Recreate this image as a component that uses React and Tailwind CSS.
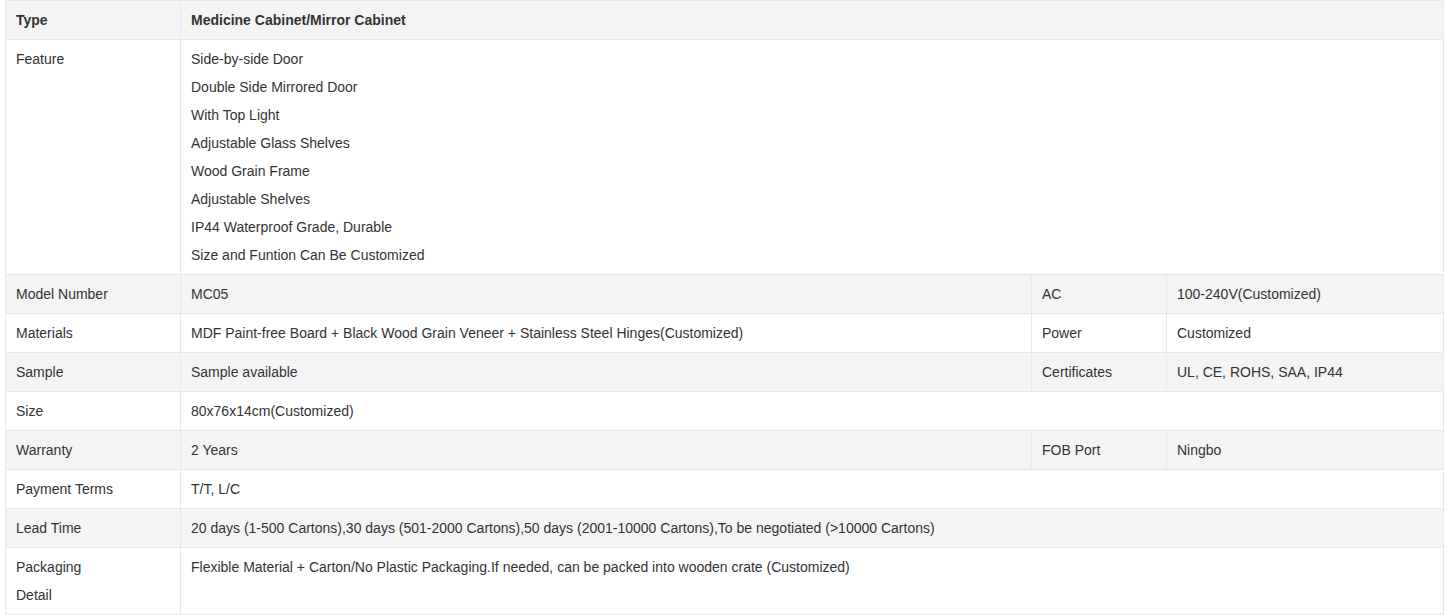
export default function App() {
  const rows = [
    { k: "Model Number", v: "MC05", k2: "AC", v2: "100-240V(Customized)" },
    { k: "Materials", v: "MDF Paint-free Board + Black Wood Grain Veneer + Stainless Steel Hinges(Customized)", k2: "Power", v2: "Customized" },
    { k: "Sample", v: "Sample available", k2: "Certificates", v2: "UL, CE, ROHS, SAA, IP44" },
    { k: "Size", v: "80x76x14cm(Customized)" },
    { k: "Warranty", v: "2 Years", k2: "FOB Port", v2: "Ningbo" },
    { k: "Payment Terms", v: "T/T, L/C" },
    { k: "Lead Time", v: "20 days (1-500 Cartons),30 days (501-2000 Cartons),50 days (2001-10000 Cartons),To be negotiated (>10000 Cartons)" },
    { k: "Packaging Detail", v: "Flexible Material + Carton/No Plastic Packaging.If needed, can be packed into wooden crate (Customized)", wrapKey: true },
  ];
  const features = [
    "Side-by-side Door",
    "Double Side Mirrored Door",
    "With Top Light",
    "Adjustable Glass Shelves",
    "Wood Grain Frame",
    "Adjustable Shelves",
    "IP44 Waterproof Grade, Durable",
    "Size and Funtion Can Be Customized",
  ];
  const td = "border border-[#e8e8e8] px-[10px] py-[5px] align-top";
  return (
    <div className="bg-white px-[5px] text-[14px] leading-[28px] text-[#333]" style={{ fontFamily: "Arial, 'Liberation Sans', sans-serif" }}>
      <table className="w-full table-fixed border-collapse">
        <colgroup>
          <col className="w-[175px]" />
          <col className="w-[851px]" />
          <col className="w-[135px]" />
          <col />
        </colgroup>
        <tbody>
          <tr className="bg-[#f4f4f4] font-bold">
            <td className={td}>Type</td>
            <td className={td} colSpan={3}>Medicine Cabinet/Mirror Cabinet</td>
          </tr>
          <tr className="bg-white">
            <td className={td}>Feature</td>
            <td className={td} colSpan={3}>
              {features.map((f) => (
                <div key={f}>{f}</div>
              ))}
            </td>
          </tr>
          {rows.map((r, i) => (
            <tr key={r.k} className={i % 2 === 0 ? "bg-[#f4f4f4]" : "bg-white"}>
              <td className={td}>
                {r.wrapKey ? (
                  <>
                    <div>Packaging</div>
                    <div>Detail</div>
                  </>
                ) : (
                  r.k
                )}
              </td>
              {r.k2 ? (
                <>
                  <td className={td}>{r.v}</td>
                  <td className={td}>{r.k2}</td>
                  <td className={td}>{r.v2}</td>
                </>
              ) : (
                <td className={td} colSpan={3}>{r.v}</td>
              )}
            </tr>
          ))}
        </tbody>
      </table>
    </div>
  );
}
